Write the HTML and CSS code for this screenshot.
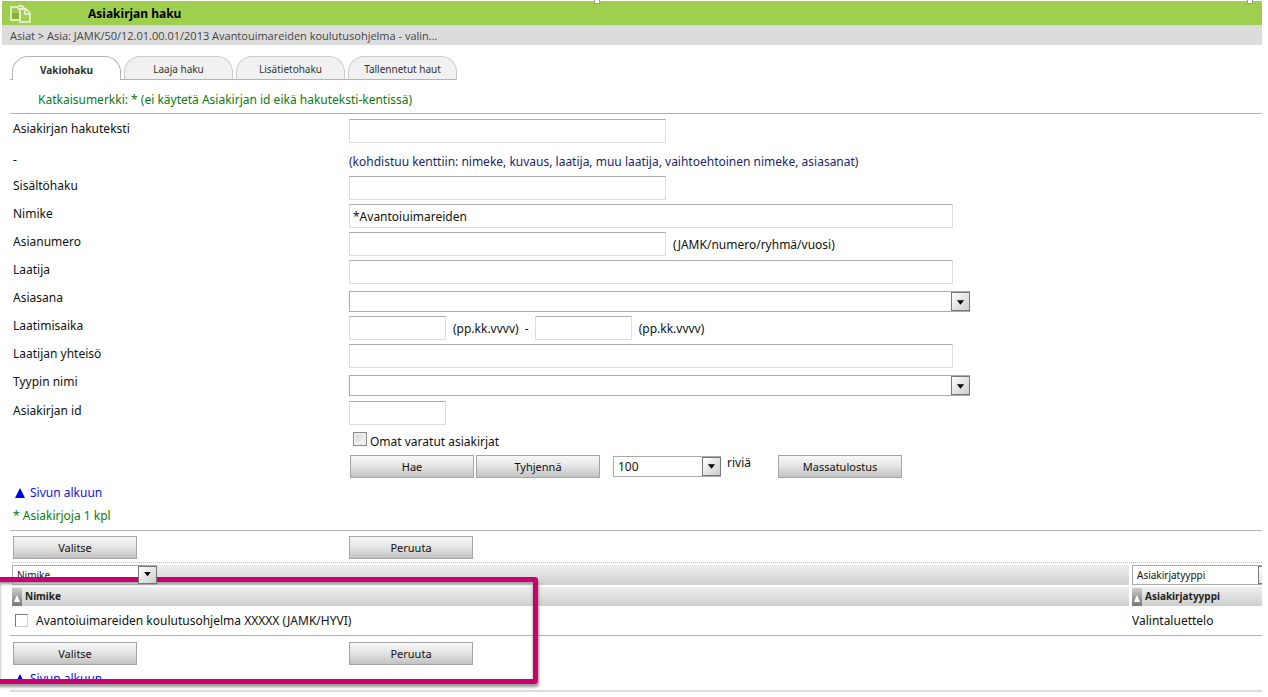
FILE: index.html
```html
<!DOCTYPE html>
<html lang="fi">
<head>
<meta charset="utf-8">
<title>Asiakirjan haku</title>
<link rel="stylesheet" href="styles.css">
</head>
<body>
<header class="titlebar">
  <svg class="doc-icon" width="21" height="18" viewBox="0 0 21 18" aria-hidden="true">
    <path d="M1 2h6l3 3v10H1z" fill="#a3c95a" stroke="#f3f8e4" stroke-width="1.4"/>
    <path d="M2 8h7v6H2z" fill="#86b234"/>
    <path d="M8 1h4l3 3" fill="none" stroke="#f3f8e4" stroke-width="1.4"/>
    <path d="M10 4h6l4 4v9h-10z" fill="#a3cf58" stroke="#f3f8e4" stroke-width="1.4"/>
    <path d="M15 4v5h5" fill="none" stroke="#f3f8e4" stroke-width="1.4"/>
  </svg>
  <h1>Asiakirjan haku</h1>
  <i class="handle handle-mid"></i><i class="handle handle-end"></i>
</header>
<nav class="crumbs">Asiat &gt; Asia: JAMK/50/12.01.00.01/2013 Avantouimareiden koulutusohjelma - valin...</nav>
<main class="content">
  <div class="tabs">
    <button class="tab active" type="button">Vakiohaku</button>
    <button class="tab" type="button">Laaja haku</button>
    <button class="tab" type="button">Lisätietohaku</button>
    <button class="tab" type="button">Tallennetut haut</button>
  </div>
  <p class="hint">Katkaisumerkki: * (ei käytetä Asiakirjan id eikä hakuteksti-kentissä)</p>
  <form class="search">
    <div class="row"><label for="teksti">Asiakirjan hakuteksti</label><div class="field"><input class="text mid" id="teksti" type="text"></div></div>
    <div class="row note"><span class="dash">-</span><div class="field info">(kohdistuu kenttiin: nimeke, kuvaus, laatija, muu laatija, vaihtoehtoinen nimeke, asiasanat)</div></div>
    <div class="row"><label for="sisalto">Sisältöhaku</label><div class="field"><input class="text mid" id="sisalto" type="text"></div></div>
    <div class="row"><label for="nimike">Nimike</label><div class="field"><input class="text long" id="nimike" type="text" value="*Avantoiuimareiden"></div></div>
    <div class="row"><label for="numero">Asianumero</label><div class="field"><input class="text mid" id="numero" type="text"><span>(JAMK/numero/ryhmä/vuosi)</span></div></div>
    <div class="row"><label for="laatija">Laatija</label><div class="field"><input class="text long" id="laatija" type="text"></div></div>
    <div class="row"><label for="asiasana">Asiasana</label><div class="field drop"><span class="combo wide"><select id="asiasana"><option></option></select><svg class="arrow" viewBox="0 0 18 19" aria-hidden="true"><path d="M5 8h8l-4 5z"/></svg></span></div></div>
    <div class="row"><label for="alku">Laatimisaika</label><div class="field"><input class="text short" id="alku" type="text"><span class="until">(pp.kk.vvvv)&nbsp; -</span><input class="text short" type="text" aria-label="Laatimisaika päättyen"><span>(pp.kk.vvvv)</span></div></div>
    <div class="row"><label for="yhteiso">Laatijan yhteisö</label><div class="field"><input class="text long" id="yhteiso" type="text"></div></div>
    <div class="row spaced"><label for="tyyppi">Tyypin nimi</label><div class="field drop"><span class="combo wide"><select id="tyyppi"><option></option></select><svg class="arrow" viewBox="0 0 18 19" aria-hidden="true"><path d="M5 8h8l-4 5z"/></svg></span></div></div>
    <div class="row"><label for="id">Asiakirjan id</label><div class="field"><input class="text short" id="id" type="text"></div></div>
    <div class="own"><input class="check shaded" id="omat" type="checkbox"><label for="omat">Omat varatut asiakirjat</label></div>
    <div class="actions">
      <button class="btn" type="button">Hae</button>
      <button class="btn" type="button">Tyhjennä</button>
      <span class="combo count"><select id="rivit"><option>100</option></select><svg class="arrow" viewBox="0 0 18 19" aria-hidden="true"><path d="M5 7h8l-4 5z"/></svg></span>
      <label class="lines" for="rivit">riviä</label>
      <button class="btn" type="button">Massatulostus</button>
    </div>
  </form>
  <a class="top" href="#"><svg width="10" height="10" viewBox="0 0 10 10" aria-hidden="true"><path d="M5 0l5 10H0z"/></svg>Sivun alkuun</a>
  <p class="total">* Asiakirjoja 1 kpl</p>
  <section class="results">
    <div class="pair"><button class="btn" type="button">Valitse</button><button class="btn" type="button">Peruuta</button></div>
    <div class="list">
      <table>
        <colgroup><col><col class="type-col"></colgroup>
        <thead>
          <tr class="filters">
            <td><span class="combo filter"><select aria-label="Sarake 1"><option>Nimike</option></select><svg class="arrow" viewBox="0 0 18 19" aria-hidden="true"><path d="M5 6h8l-4 5z"/></svg></span></td>
            <td><span class="combo filter"><select aria-label="Sarake 2"><option>Asiakirjatyyppi</option></select><svg class="arrow" viewBox="0 0 18 19" aria-hidden="true"><path d="M5 6h8l-4 5z"/></svg></span></td>
          </tr>
          <tr class="heads">
            <th><div><svg class="sort" width="10" height="18" viewBox="0 0 10 18" aria-hidden="true"><path d="M5 7l3 7H2z"/></svg>Nimike</div></th>
            <th><div><svg class="sort" width="10" height="18" viewBox="0 0 10 18" aria-hidden="true"><path d="M5 7l3 7H2z"/></svg>Asiakirjatyyppi</div></th>
          </tr>
        </thead>
        <tbody>
          <tr><td><div class="doc"><input class="check" id="doc" type="checkbox"><label for="doc">Avantoiuimareiden koulutusohjelma XXXXX (JAMK/HYVI)</label></div></td><td>Valintaluettelo</td></tr>
        </tbody>
      </table>
    </div>
    <div class="pair lower"><button class="btn" type="button">Valitse</button><button class="btn" type="button">Peruuta</button></div>
    <a class="top" href="#"><svg width="10" height="10" viewBox="0 0 10 10" aria-hidden="true"><path d="M5 0l5 10H0z"/></svg>Sivun alkuun</a>
    <div class="highlight"></div>
  </section>
</main>
</body>
</html>
```
FILE: styles.css
```css
* { box-sizing: border-box; }
body {
  margin: 0;
  padding: 1px 6px 0 2px;
  background: #fff;
  color: #111;
  font: 12px/16px "Noto Sans", sans-serif;
  overflow-x: hidden;
}
p, h1 { margin: 0; }
input, select, button { font: inherit; color: inherit; margin: 0; }

.titlebar {
  position: relative;
  display: flex;
  align-items: center;
  height: 24px;
  padding-left: 8px;
  background: #9fcf4f;
  border-top: 1px solid #a9bd86;
}
.doc-icon { width: 21px; margin-right: 57px; }
h1 { font-size: 12px; line-height: 16px; color: #000; }
.handle {
  position: absolute;
  top: -3px;
  width: 6px;
  height: 5px;
  background: #fff;
  border: 1px solid #999;
}
.handle-mid { left: 47%; }
.handle-end { right: 9px; }
.crumbs {
  height: 20px;
  padding: 3px 8px 0;
  background: #dcdcdc;
  color: #444;
  font-family: "Open Sans", sans-serif;
  font-size: 11px;
}

.content { padding-left: 8px; }
.tabs { display: flex; gap: 3px; width: max-content; margin-top: 11px; padding-left: 2px; border-bottom: 1px solid #b4b4b4; }
.tab {
  width: 109px;
  height: 23px;
  padding: 2px 0 0;
  background: #f1f1f1;
  border: 1px solid #ccc;
  border-bottom: 0;
  border-radius: 16px 16px 0 0;
  color: #333;
  font-size: 10px;
}
.tab.active { margin-bottom: -1px; height: 24px; background: #fff; border-color: #b4b4b4; font-weight: bold; }
.hint { padding: 12px 28px 5px; color: #0a7a14; border-bottom: 1px solid #b0b0b0; }

.search { padding: 4px 0 0 3px; }
.row { display: grid; grid-template-columns: 336px 1fr; height: 28px; align-items: start; }
.row > label, .dash { padding-top: 3px; }
.note, .spaced { height: 29px; }
.note .dash { padding-top: 6px; }
.field { display: flex; align-items: center; padding-top: 1px; }
.field > span:not(.combo) { padding: 2px 7px 0; }
.field.info { padding-top: 8px; color: #201f6e; }
.field.drop { padding-top: 4px; }
.field > .until:not(.combo) { padding-right: 6px; }
.text {
  height: 24px;
  padding: 0 3px;
  background: #fff;
  border: 1px solid #ddd;
  border-top-color: #aaa;
  border-radius: 1px;
}
.mid { width: 317px; }
.long { width: 604px; }
.short { width: 97px; }

.combo { display: inline-grid; grid-template-columns: 1fr 19px; height: 21px; vertical-align: top; }
.combo select {
  grid-area: 1 / 1 / 2 / 3;
  width: 100%;
  height: 100%;
  padding: 0 20px 0 4px;
  appearance: none;
  background: #fff;
  border: 1px solid #aaa;
  border-radius: 0;
}
.arrow {
  grid-area: 1 / 2;
  z-index: 1;
  width: 19px;
  height: 19px;
  margin: 1px 0;
  pointer-events: none;
  background: linear-gradient(135deg, #fff, #ccc);
  border: 1px solid #777;
}
.wide { width: 621px; }
.count { width: 108px; }

.own { display: flex; align-items: flex-start; gap: 3px; margin: 4px 0 0 340px; }
.own label { padding-top: 2px; }
.check {
  appearance: none;
  width: 13px;
  height: 13px;
  background: #fff;
  border: 1px solid #ccc;
  border-top-color: #777;
  border-left-color: #777;
}
.shaded { width: 14px; height: 14px; background: linear-gradient(135deg, #ccc, #fff); border-color: #888; box-shadow: inset 0 0 0 2px #eee; }
.actions { display: flex; margin: 5px 0 0 337px; }
.btn {
  width: 124px;
  height: 23px;
  padding: 0;
  background: linear-gradient(#f8f8f8, #e3e3e3 50%, #c2c2c2);
  border: 1px solid #a5a5a5;
  font-size: 11px;
}
.actions .btn + .btn { margin-left: 2px; }
.actions .count { margin: 1px 6px 0 13px; }
.lines { width: 51px; }

.top { display: flex; align-items: center; gap: 5px; width: max-content; margin: 7px 0 0 5px; color: #1111e0; text-decoration: none; }
.top svg { fill: #00e; }
.total { margin: 7px 0 0 3px; color: #0a7a14; }

.results { position: relative; margin-top: 6px; padding-bottom: 3px; border-top: 1px solid #b0b0b0; border-bottom: 2px solid #ddd; }
.pair { display: flex; gap: 212px; padding: 5px 0 3px 3px; }
.list { margin-left: 2px; padding-top: 2px; border-top: 1px dotted #bbb; overflow: hidden; }
table { width: 100%; border-spacing: 0; table-layout: fixed; }
.type-col { width: 133px; }
td, th { padding: 0; text-align: left; overflow: hidden; }
td + td, th + th { border-left: 3px solid #fff; }
.filters td, .heads th { background: linear-gradient(#efefef, #cfcfcf); background-clip: padding-box; }
.filters td { height: 22px; border-bottom: 2px solid #fff; vertical-align: top; }
.heads th { height: 19px; }
.filters .combo { height: 20px; }
.filter { width: 145px; font-size: 10px; }
.filter .arrow { height: 18px; }
.heads div { display: flex; gap: 3px; height: 18px; font-size: 10px; color: #222; }
.sort { background: linear-gradient(#ccc, #777); fill: #fff; }
tbody td { height: 29px; }
.doc { display: flex; align-items: center; gap: 8px; padding-left: 3px; }
.lower { padding-top: 6px; border-top: 1px solid #b0b0b0; }
.results .top { margin-top: 3px; }
.highlight {
  position: absolute;
  top: 46px;
  left: -15px;
  width: 543px;
  height: 107px;
  border: 5px solid #cb0070;
  border-radius: 3px;
  box-shadow: 1px 3px 3px #999, inset 0 2px 3px #999;
  pointer-events: none;
}
```
